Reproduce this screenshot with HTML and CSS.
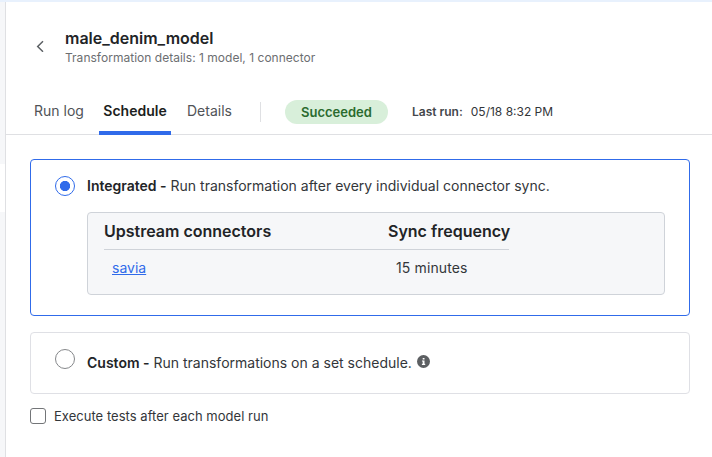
FILE: index.html
```html
<!DOCTYPE html>
<html lang="en">
<head>
<meta charset="utf-8">
<title>male_denim_model</title>
<link rel="stylesheet" href="styles.css">
</head>
<body>
<div class="topline"></div>
<div class="app">
  <aside class="rail"><div class="rail-active"></div></aside>
  <main class="page">
    <header class="header">
      <svg class="back" width="8" height="12" viewBox="0 0 8 12"><path d="M7 1.300 1.700 6.500 7 11.700" fill="none" stroke="#5c6064" stroke-width="1.5"/></svg>
      <div class="heading">
        <h1>male_denim_model</h1>
        <p>Transformation details: 1 model, 1 connector</p>
      </div>
    </header>
    <nav class="tabs">
      <a class="tab tab-log">Run log</a>
      <a class="tab tab-schedule active">Schedule</a>
      <a class="tab tab-details">Details</a>
      <span class="divider"></span>
      <span class="badge">Succeeded</span>
      <span class="last-run"><b>Last run:</b><span>05/18 8:32 PM</span></span>
    </nav>
    <section class="content">
      <div class="card selected">
        <span class="radio on"></span>
        <div class="body">
          <p class="option"><b>Integrated -</b> <span>Run transformation after every individual connector sync.</span></p>
          <div class="panel">
            <table>
              <thead><tr><th class="col-name"><span>Upstream connectors</span></th><th><span>Sync frequency</span></th></tr></thead>
              <tbody><tr><td><a class="link"><span>savia</span></a></td><td><span class="minutes">15 minutes</span></td></tr></tbody>
            </table>
          </div>
        </div>
      </div>
      <div class="card custom">
        <span class="radio"></span>
        <p class="option"><b>Custom -</b> <span>Run transformations on a set schedule.</span></p>
        <svg class="info" width="13" height="13" viewBox="0 0 13 13"><circle cx="6.500" cy="6.500" r="6.500" fill="#5c5f62"/><path d="M5.700 3h1.800v1.600H5.700zM5 5.500h2.500v3.300h.7V10H4.900V8.800h.8V6.600H5z" fill="#fff"/></svg>
      </div>
      <label class="check"><span class="box"></span><span>Execute tests after each model run</span></label>
    </section>
  </main>
</div>
</body>
</html>
```

FILE: styles.css
```css
* { box-sizing: border-box; }
body { margin: 0; height: 457px; overflow: hidden; background: #fff; color: #33363a; font: 14px/20px Inter, sans-serif; }
h1, p { margin: 0; }
b { font-weight: 600; color: #222427; }
.topline { height: 2px; background: #e8f1fd; }
.app { display: flex; height: 455px; }
.rail { width: 6px; background: #f6f7f9; border-right: 1px solid #dfe0e3; padding-top: 162px; }
.rail-active { height: 48px; background: #fff; }
.page { flex: 1; min-width: 0; }
.header { height: 84px; display: flex; padding: 26px 0 0 30px; }
.back { margin-top: 12px; }
.heading { margin-left: 21px; }
h1 { font-size: 16px; line-height: 20px; font-weight: 600; color: #222427; }
.heading p { font-size: 12px; line-height: 20px; color: #6c6e71; letter-spacing: .02px; }
.tabs { height: 49px; display: flex; align-items: flex-start; padding-left: 28px; border-bottom: 1px solid #dfe0e3; }
.tab { height: 49px; line-height: 50px; color: #505357; white-space: nowrap; }
.tab-log { width: 65px; }
.tab-schedule { width: 72px; text-align: center; margin-right: 16px; }
.tab.active { color: #1c1e20; font-weight: 600; border-bottom: 4px solid #306bea; }
.divider { width: 1px; height: 20px; background: #dfe0e3; margin: 16px 0 0 28px; }
.badge { width: 103px; height: 24px; margin: 14px 0 0 24px; border-radius: 12px; background: #d8efda; color: #2a6b2e; font-size: 13px; font-weight: 600; line-height: 25px; text-align: center; }
.last-run { margin: 16px 0 0 24px; display: flex; gap: 8px; font-size: 12px; white-space: nowrap; }
.last-run b { color: #44474b; }
.content { padding: 24px 22px 0 24px; }
.card { display: flex; border: 1px solid #dfe0e5; border-radius: 4px; padding-left: 24px; }
.selected { height: 157px; border-color: #306bea; padding-top: 16px; }
.radio { flex: none; width: 20px; height: 20px; border: 1px solid #85878a; border-radius: 50%; margin-right: 12px; }
.radio.on { border-color: #306bea; background: radial-gradient(circle, #306bea 0 4.8px, #fff 5.4px); }
.option { white-space: nowrap; }
.panel { width: 578px; height: 83px; margin-top: 16px; padding: 0 16px; border: 1px solid #cfd3d9; border-radius: 4px; background: #f6f7f9; }
table { border-collapse: collapse; table-layout: fixed; width: 405px; }
th { height: 36px; padding: 1px 0 0; text-align: left; font-size: 16px; font-weight: 600; color: #222427; border-bottom: 1px solid #cfd3d9; white-space: nowrap; }
.col-name { width: 284px; }
td { height: 37px; padding: 0 8px; }
.minutes { letter-spacing: .12px; }
.link { color: #306bea; text-decoration: underline; }
.custom { height: 62px; margin-top: 16px; padding-top: 16px; }
.custom .option { margin-top: 4px; }
.info { margin: 6px 0 0 5.5px; }
.check { display: flex; align-items: center; gap: 8px; margin-top: 12px; font-size: 13px; letter-spacing: .03px; }
.box { width: 16px; height: 16px; border: 1px solid #737578; border-radius: 3px; }
```
